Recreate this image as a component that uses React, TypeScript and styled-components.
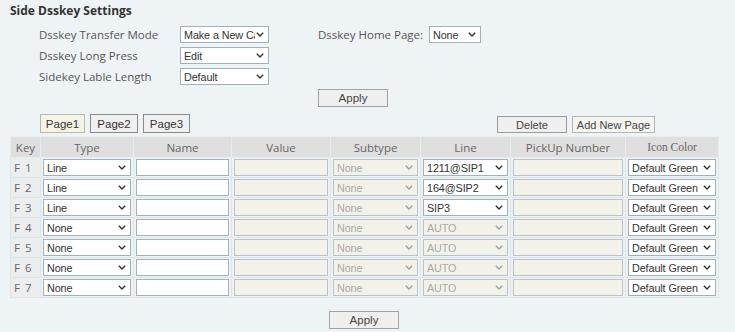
import { createGlobalStyle, styled } from 'styled-components';

const GlobalStyle = createGlobalStyle`
  html, body {
    margin: 0;
    padding: 0;
    background: #eef3f5;
  }
  body {
    font-family: "Liberation Sans", Arial, sans-serif;
    color: #333;
  }
`;

const Page = styled.div`
  width: 735px;
  height: 332px;
  padding: 0 0 0 10px;
  box-sizing: border-box;
  overflow: hidden;
`;

const Title = styled.h1`
  margin: 0;
  padding-top: 3px;
  height: 23px;
  font: bold 12px "Open Sans", "DejaVu Sans", sans-serif;
  color: #333;
  line-height: 16px;
`;

const SettingsGrid = styled.div`
  display: grid;
  grid-template-columns: 141px 89px 49px 111px 52px;
  grid-auto-rows: 17px;
  row-gap: 4px;
  margin-left: 29px;
  align-items: center;
`;

const Label = styled.span`
  font: 11.5px "Open Sans", "DejaVu Sans", sans-serif;
  color: #555;
  white-space: nowrap;
`;

const ActionRow = styled.div<{ $indent: number; $top: number }>`
  padding-left: ${(p) => p.$indent}px;
  margin-top: ${(p) => p.$top}px;
  display: flex;
`;

const Button = styled.button<{ $width: number; $height?: number }>`
  width: ${(p) => p.$width}px;
  height: ${(p) => p.$height ?? 18}px;
  padding: 0;
  border: 1px solid #a2a2a2;
  background: #efefef;
  font: 11.5px "Liberation Sans", Arial, sans-serif;
  color: #444;
`;

const Toolbar = styled.div`
  display: flex;
  align-items: flex-end;
  margin-top: 7px;
  width: 708px;
  height: 19px;
`;

const PageTabs = styled.div`
  display: flex;
  gap: 5px;
  margin-left: 30px;
`;

const PageTab = styled.button<{ $active?: boolean; $width: number }>`
  width: ${(p) => p.$width}px;
  height: 19px;
  padding: 0;
  border: 1px solid ${(p) => (p.$active ? '#b9b9b0' : '#8a8a8a')};
  background: ${(p) => (p.$active ? '#f4f3e6' : '#f0f0f0')};
  font: 11.5px "Liberation Sans", Arial, sans-serif;
  color: #333;
`;

const PageActions = styled.div`
  display: flex;
  gap: 5px;
  margin-left: auto;
  margin-right: 63px;
`;

const SmallButton = styled.button<{ $width: number; $light?: boolean }>`
  width: ${(p) => p.$width}px;
  height: 17px;
  padding: 0;
  border: 1px solid ${(p) => (p.$light ? '#b4b4b4' : '#9a9a9a')};
  background: ${(p) => (p.$light ? '#f6f6f2' : '#efefef')};
  font: 11px "Liberation Sans", Arial, sans-serif;
  color: #444;
`;

const Table = styled.table`
  margin-top: 3px;
  width: 708px;
  border-collapse: collapse;
  table-layout: fixed;
`;

const Th = styled.th<{ $serif?: boolean }>`
  height: 20px;
  padding: 0;
  background: #dfdfdf;
  border: 1px solid #e9ecec;
  font: 11.5px ${(p) => (p.$serif ? '"Liberation Serif", serif' : '"Open Sans", "DejaVu Sans", sans-serif')};
  font-weight: normal;
  color: #666;
  text-align: center;
`;

const Td = styled.td<{ $key?: boolean }>`
  height: 20px;
  padding: 0 2px;
  border: 1px solid #dfe5e7;
  background: ${(p) => (p.$key ? '#eaeeef' : '#eef2f3')};
  font: 11.5px "Open Sans", "DejaVu Sans", sans-serif;
  color: #555;
  box-sizing: border-box;
`;

const KeyText = styled.span`
  padding-left: 1px;
  letter-spacing: 1px;
  color: #666;
`;

const Field = styled.div<{ $disabled?: boolean }>`
  height: 17px;
  box-sizing: border-box;
  border: 1px solid ${(p) => (p.$disabled ? '#b8c3cc' : '#9fb0bf')};
  background: ${(p) => (p.$disabled ? '#f3f2ea' : '#ffffff')};
`;

const SelectBox = styled.div<{ $disabled?: boolean }>`
  display: flex;
  align-items: center;
  height: 17px;
  box-sizing: border-box;
  padding: 0 4px 0 3px;
  border: 1px solid ${(p) => (p.$disabled ? '#b8c3cc' : '#9fb0bf')};
  background: ${(p) => (p.$disabled ? '#f3f2ea' : '#ffffff')};
  color: ${(p) => (p.$disabled ? '#a9a9a9' : '#333')};
  font: 10.8px "Liberation Sans", Arial, sans-serif;
  letter-spacing: -0.1px;
  white-space: nowrap;
  overflow: hidden;
`;

const SelectText = styled.span`
  flex: 1;
  min-width: 0;
  overflow: hidden;
`;

const Chevron = ({ muted }: { muted?: boolean }) => (
  <svg width="8" height="5" viewBox="0 0 8 5" style={{ flex: 'none', marginLeft: 1 }}>
    <path d="M0.8 0.8 L4 4 L7.2 0.8" fill="none" stroke={muted ? '#9aa3aa' : '#333'} strokeWidth="1.4" />
  </svg>
);

const Select = ({ value, disabled }: { value: string; disabled?: boolean }) => (
  <SelectBox $disabled={disabled}>
    <SelectText>{value}</SelectText>
    <Chevron muted={disabled} />
  </SelectBox>
);

const FinalRow = styled.div`
  display: flex;
  justify-content: center;
  width: 708px;
  margin-top: 13px;
`;

const rows = [
  { key: 'F 1', type: 'Line', line: '1211@SIP1', lineOn: true },
  { key: 'F 2', type: 'Line', line: '164@SIP2', lineOn: true },
  { key: 'F 3', type: 'Line', line: 'SIP3', lineOn: true },
  { key: 'F 4', type: 'None', line: 'AUTO', lineOn: false },
  { key: 'F 5', type: 'None', line: 'AUTO', lineOn: false },
  { key: 'F 6', type: 'None', line: 'AUTO', lineOn: false },
  { key: 'F 7', type: 'None', line: 'AUTO', lineOn: false },
];

const widths = [30, 93, 98, 99, 90, 90, 115, 93];

export default function App() {
  return (
    <>
      <GlobalStyle />
      <Page>
        <Title>Side Dsskey Settings</Title>
        <SettingsGrid>
          <Label>Dsskey Transfer Mode</Label>
          <Select value="Make a New Call" />
          <span />
          <Label>Dsskey Home Page:</Label>
          <Select value="None" />
          <Label>Dsskey Long Press</Label>
          <Select value="Edit" />
          <span />
          <span />
          <span />
          <Label>Sidekey Lable Length</Label>
          <Select value="Default" />
        </SettingsGrid>
        <ActionRow $indent={308} $top={4}>
          <Button $width={70}>Apply</Button>
        </ActionRow>
        <Toolbar>
          <PageTabs>
            <PageTab $active $width={45}>Page1</PageTab>
            <PageTab $width={48}>Page2</PageTab>
            <PageTab $width={47}>Page3</PageTab>
          </PageTabs>
          <PageActions>
            <SmallButton $width={70}>Delete</SmallButton>
            <SmallButton $width={83} $light>Add New Page</SmallButton>
          </PageActions>
        </Toolbar>
        <Table>
          <colgroup>
            {widths.map((w, i) => (
              <col key={i} style={{ width: w }} />
            ))}
          </colgroup>
          <thead>
            <tr>
              <Th>Key</Th>
              <Th>Type</Th>
              <Th>Name</Th>
              <Th>Value</Th>
              <Th>Subtype</Th>
              <Th>Line</Th>
              <Th>PickUp Number</Th>
              <Th $serif>Icon Color</Th>
            </tr>
          </thead>
          <tbody>
            {rows.map((r) => (
              <tr key={r.key}>
                <Td $key>
                  <KeyText>{r.key}</KeyText>
                </Td>
                <Td>
                  <Select value={r.type} />
                </Td>
                <Td>
                  <Field />
                </Td>
                <Td>
                  <Field $disabled />
                </Td>
                <Td>
                  <Select value="None" disabled />
                </Td>
                <Td>
                  <Select value={r.line} disabled={!r.lineOn} />
                </Td>
                <Td>
                  <Field $disabled />
                </Td>
                <Td>
                  <Select value="Default Green" />
                </Td>
              </tr>
            ))}
          </tbody>
        </Table>
        <FinalRow>
          <Button $width={70}>Apply</Button>
        </FinalRow>
      </Page>
    </>
  );
}
